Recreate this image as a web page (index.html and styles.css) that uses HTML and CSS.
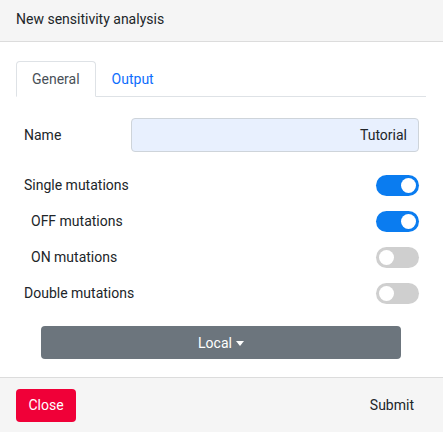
FILE: index.html
```html
<!DOCTYPE html>
<html>
<head>
<meta charset="utf-8">
<link rel="stylesheet" href="styles.css">
</head>
<body>
<div class="modal">
  <div class="modal-header">New sensitivity analysis</div>
  <div class="modal-body">
    <div class="tabs">
      <div class="tab active">General</div>
      <div class="tab">Output</div>
    </div>
    <div class="form">
      <div class="row name-row">
        <label class="label">Name</label>
        <div class="input">Tutorial</div>
      </div>
      <div class="row">
        <span class="label">Single mutations</span>
        <span class="switch on"><span class="knob"></span></span>
      </div>
      <div class="row sub">
        <span class="label">OFF mutations</span>
        <span class="switch on"><span class="knob"></span></span>
      </div>
      <div class="row sub">
        <span class="label">ON mutations</span>
        <span class="switch"><span class="knob"></span></span>
      </div>
      <div class="row">
        <span class="label">Double mutations</span>
        <span class="switch"><span class="knob"></span></span>
      </div>
      <div class="dropdown">Local<span class="caret"></span></div>
    </div>
  </div>
  <div class="modal-footer">
    <button class="btn-close">Close</button>
    <button class="btn-submit">Submit</button>
  </div>
</div>
</body>
</html>
```
FILE: styles.css
```css
* { box-sizing: border-box; }
html, body { margin: 0; padding: 0; background: #fff; }
body {
  font-family: Roboto, "Liberation Sans", sans-serif;
  font-size: 14px;
  color: #212529;
  width: 443px;
  height: 432px;
  overflow: hidden;
}
.modal { display: flex; flex-direction: column; height: 432px; }
.modal-header {
  height: 42px;
  background: #f5f5f5;
  border-bottom: 1px solid #dcdcdc;
  padding: 0 16px;
  display: flex;
  align-items: center;
  padding-bottom: 3px;
}
.modal-body { flex: 1; padding: 19px 17px 0 16px; }
.tabs {
  display: flex;
  border-bottom: 1px solid #dee2e6;
  height: 36px;
}
.tab {
  height: 36px;
  padding: 0 15px;
  border: 1px solid transparent;
  border-radius: 4px 4px 0 0;
  display: flex;
  align-items: center;
  color: #0d6efd;
  margin-bottom: -1px;
}
.tab.active {
  color: #495057;
  border-color: #dee2e6 #dee2e6 #fff;
  background: #fff;
}
.form { padding: 21px 7px 0 7px; }
.row {
  display: flex;
  align-items: center;
  justify-content: space-between;
  height: 36px;
}
.name-row { height: 34px; margin-bottom: 15px; }
.row.sub .label { padding-left: 8px; }
.label { padding-left: 1px; }
.name-row .label { width: 108px; }
.input {
  flex: 1;
  height: 34px;
  background: #e8f0fe;
  border: 1px solid #ced4da;
  border-radius: 4px;
  display: flex;
  align-items: center;
  justify-content: flex-end;
  padding-right: 11px;
  color: #212529;
}
.switch {
  width: 43px;
  height: 21px;
  border-radius: 11px;
  background: #cfcfcf;
  position: relative;
}
.switch .knob {
  position: absolute;
  top: 3px;
  left: 3px;
  width: 15px;
  height: 15px;
  border-radius: 50%;
  background: #fff;
}
.switch.on { background: #0a7cf0; }
.switch.on .knob { left: 25px; }
.dropdown {
  margin: 15px 18px 0 18px;
  height: 33px;
  background: #6c757d;
  border-radius: 4px;
  color: #fff;
  display: flex;
  align-items: center;
  justify-content: center;
}
.caret {
  display: inline-block;
  margin-left: 4px;
  margin-top: 1px;
  border-top: 5px solid #fff;
  border-left: 4.5px solid transparent;
  border-right: 4.5px solid transparent;
}
.modal-footer {
  height: 55px;
  background: #f5f5f5;
  border-top: 1px solid #dcdcdc;
  display: flex;
  align-items: center;
  justify-content: space-between;
  padding: 0 17px 0 16px;
}
button { font-family: inherit; font-size: 14px; border: 0; cursor: pointer; }
.btn-close {
  width: 60px;
  height: 33px;
  background: #f00038;
  color: #fff;
  border-radius: 4px;
  padding: 0;
}
.btn-submit { background: transparent; color: #212529; padding: 0 12px; }
```
